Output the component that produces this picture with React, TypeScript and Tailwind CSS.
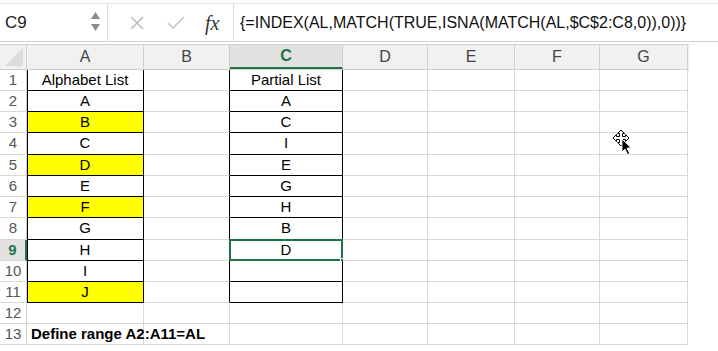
import React from 'react'

const COLS = [
  { key: 'A', w: 'w-[117px]' },
  { key: 'B', w: 'w-[86px]' },
  { key: 'C', w: 'w-[113px]' },
  { key: 'D', w: 'w-[85px]' },
  { key: 'E', w: 'w-[87px]' },
  { key: 'F', w: 'w-[85px]' },
  { key: 'G', w: 'w-[88px]' },
]

const colA = ['Alphabet List', 'A', 'B', 'C', 'D', 'E', 'F', 'G', 'H', 'I', 'J']
const colC = ['Partial List', 'A', 'C', 'I', 'E', 'G', 'H', 'B', 'D', '', '']
const yellowRows = [3, 5, 7, 11]
// a couple of rows come out a pixel taller in the screenshot
const tallRows = [4, 8]

function cellClass(row: number, col: string) {
  const boxed = row <= 11 && (col === 'A' || col === 'C')
  const beforeBox = row <= 11 && col === 'B'
  let cls = 'relative h-full flex items-center justify-center border-b '
  if (boxed) cls += 'border-b-black border-r border-r-black '
  else if (beforeBox) cls += 'border-b-[#d9d9d9] border-r border-r-black '
  else cls += 'border-b-[#d9d9d9] border-r border-r-[#d9d9d9] '
  if (col === 'A' && row <= 11) cls += 'shadow-[inset_1px_0_0_#000] '
  if (col === 'A' && yellowRows.includes(row)) cls += 'bg-[#ffff00] '
  else cls += 'bg-white '
  return cls
}

function MoveCursor() {
  return (
    <svg width="24" height="30" viewBox="0 0 24 30" className="absolute left-[612px] top-[129px]">
      <path
        d="M9 1 L12.5 4.5 L10.5 4.5 L10.5 7.5 L13.5 7.5 L13.5 5.5 L17 9 L13.5 12.5 L13.5 10.5 L10.5 10.5 L10.5 13.5 L12.5 13.5 L9 17 L5.5 13.5 L7.5 13.5 L7.5 10.5 L4.5 10.5 L4.5 12.5 L1 9 L4.5 5.5 L4.5 7.5 L7.5 7.5 L7.5 4.5 L5.5 4.5 Z"
        fill="white"
        stroke="black"
        strokeWidth="1"
      />
      <path d="M10 10 L10 23 L13 20 L15.5 25.5 L17.5 24.5 L15 19 L19 19 Z" fill="black" stroke="white" strokeWidth="0.8" />
    </svg>
  )
}

export default function App() {
  const rows = Array.from({ length: 13 }, (_, i) => i + 1)

  return (
    <div className="relative w-[718px] h-[351px] bg-white overflow-hidden font-['Liberation_Sans',Arial,sans-serif] text-black">
      {/* formula bar */}
      <div className="h-[39px] mt-[3px] border-t border-t-[#e4e4e4] border-b border-b-[#cfcfcf] flex items-center">
        <div className="w-[108px] h-full flex items-center border-r border-r-[#dcdcdc] relative">
          <span className="pl-[5px] text-[17px] text-[#222]">C9</span>
          <div className="absolute left-[91px] top-[8px] flex flex-col gap-[5px]">
            <svg width="9" height="7" viewBox="0 0 9 7"><path d="M4.5 0 L9 7 L0 7 Z" fill="#8a8a8a" /></svg>
            <svg width="9" height="7" viewBox="0 0 9 7"><path d="M0 0 L9 0 L4.5 7 Z" fill="#8a8a8a" /></svg>
          </div>
        </div>
        <div className="w-[126px] h-full flex items-center border-r border-r-[#dcdcdc]">
          <svg width="14" height="14" viewBox="0 0 14 14" className="ml-[22px]">
            <path d="M1 1 L13 13 M13 1 L1 13" stroke="#bdbdbd" strokeWidth="1.6" />
          </svg>
          <svg width="18" height="14" viewBox="0 0 18 14" className="ml-[23px]">
            <path d="M1 7 L6 12 L17 1" stroke="#c8c8c8" strokeWidth="1.6" fill="none" />
          </svg>
          <span className="ml-[20px] text-[20px] italic font-['Liberation_Serif',serif] text-[#333] leading-none">fx</span>
        </div>
        <div className="pl-[6px] text-[16px] text-[#111] whitespace-nowrap">
          {'{=INDEX(AL,MATCH(TRUE,ISNA(MATCH(AL,$C$2:C8,0)),0))}'}
        </div>
      </div>

      {/* column headers */}
      <div className="mt-[2px] h-[26px] flex border-t border-t-[#cfcfcf] border-b border-b-[#cfcfcf] bg-[#f1f1f1] w-[689px]">
        <div className="w-[27px] h-full border-r border-r-[#d0d0d0] flex items-end justify-end">
          <svg width="18" height="18" viewBox="0 0 18 18" className="mb-[3px] mr-[3px]">
            <path d="M18 0 L18 18 L0 18 Z" fill="#dcdcdc" />
          </svg>
        </div>
        {COLS.map((c) =>
          c.key === 'C' ? (
            <div
              key={c.key}
              className={`${c.w} h-full flex items-center justify-center bg-[#e2e2e2] border-r border-r-[#d0d0d0] border-b-2 border-b-[#217346] text-[16px] font-bold text-[#217346]`}
            >
              {c.key}
            </div>
          ) : (
            <div key={c.key} className={`${c.w} h-full flex items-center justify-center border-r border-r-[#d0d0d0] text-[16px] text-[#444]`}>
              {c.key}
            </div>
          )
        )}
      </div>

      {/* grid */}
      <div className="flex flex-col">
        {rows.map((r) => (
          <div key={r} className={tallRows.includes(r) ? 'flex h-[22px]' : 'flex h-[21px]'}>
            <div
              className={
                r === 9
                  ? 'w-[27px] h-full flex items-center justify-center border-b border-b-[#d9d9d9] border-r-2 border-r-[#217346] bg-[#e2e2e2] text-[15px] font-bold text-[#217346]'
                  : 'w-[27px] h-full flex items-center justify-center border-b border-b-[#d9d9d9] border-r border-r-[#d0d0d0] text-[15px] text-[#555]'
              }
            >
              {r}
            </div>
            {COLS.map((c) => (
              <div key={c.key} className={`${c.w} ${cellClass(r, c.key)} text-[15px]`}>
                {c.key === 'A' && r <= 11 ? colA[r - 1] : null}
                {c.key === 'C' && r <= 11 ? colC[r - 1] : null}
                {c.key === 'A' && r === 13 ? (
                  <span className="absolute z-10 left-[4px] top-0 h-full flex items-center font-bold whitespace-nowrap">Define range A2:A11=AL</span>
                ) : null}
                {c.key === 'C' && r === 9 ? (
                  <>
                    <div className="absolute -left-[1px] -top-[1px] -right-[1px] -bottom-[1px] border-2 border-[#217346]" />
                    <div className="absolute -right-[4px] -bottom-[4px] w-[6px] h-[6px] bg-[#217346] border border-white" />
                  </>
                ) : null}
              </div>
            ))}
          </div>
        ))}
      </div>

      <MoveCursor />
    </div>
  )
}
